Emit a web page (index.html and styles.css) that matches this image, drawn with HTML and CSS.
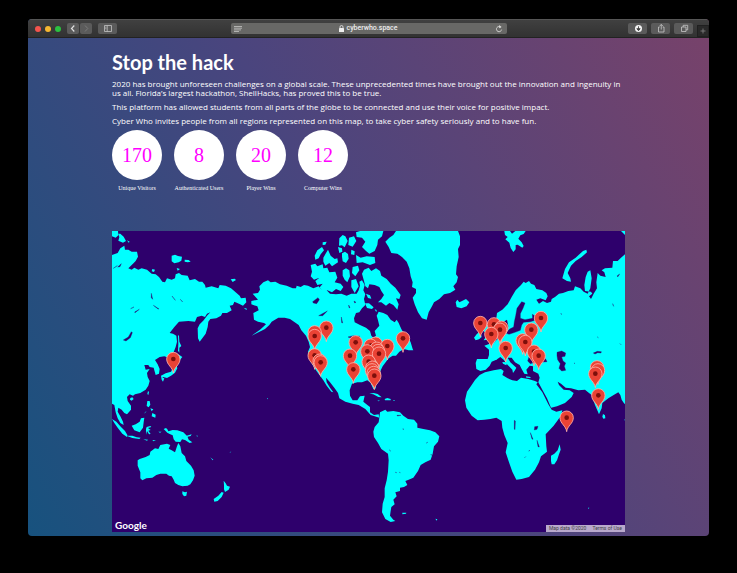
FILE: index.html
```
<!DOCTYPE html>
<html lang="en">
<head>
<meta charset="utf-8">
<meta name="viewport" content="width=device-width, initial-scale=1">
<title>Stop the hack</title>
<link rel="stylesheet" href="styles.css">
</head>
<body>
<div class="window">
  <header class="toolbar">
    <div class="side">
      <div class="lights"><span class="light red"></span><span class="light amber"></span><span class="light green"></span></div>
      <div class="history">
        <button class="tool nav" aria-label="Back"><svg width="12" height="11" viewBox="0 0 12 11"><path d="M7.3 2.5 4.5 5.5l2.8 3" fill="none" stroke="#ddd" stroke-width="1.2"/></svg></button>
        <button class="tool nav" aria-label="Forward"><svg width="12" height="11" viewBox="0 0 12 11"><path d="m5 2.5 2.8 3-2.8 3" fill="none" stroke="#7b7b7b" stroke-width="1"/></svg></button>
      </div>
      <button class="tool" aria-label="Sidebar"><svg width="18" height="11" viewBox="0 0 18 11"><path d="M5.5 2.5h7v6h-7zM8.2 2.5v6M6.3 4.2h1M6.3 5.7h1" fill="none" stroke="#c4c4c4" stroke-width=".8"/></svg></button>
    </div>
    <div class="address">
      <svg width="8" height="8" viewBox="0 0 8 8"><path d="M0 1.5h8M0 3.2h8M0 4.9h7M0 6.5h5" stroke="#bcbcba" stroke-width=".9"/></svg>
      <a class="host" href="#"><svg width="5" height="7" viewBox="0 0 5 7"><rect y="3" width="5" height="4" rx=".6" fill="#eee"/><path d="M1 3.2V2a1.5 1.5 0 0 1 3 0v1.2" fill="none" stroke="#eee" stroke-width=".8"/></svg>cyberwho.space</a>
      <button class="reload" aria-label="Reload"><svg width="8" height="8" viewBox="0 0 8 8"><path d="M6 2.4A2.6 2.6 0 1 0 6.6 4.6" fill="none" stroke="#d8d8d6" stroke-width=".9"/><path d="M4 0 6.6 2 4.2 3.3z" fill="#d8d8d6"/></svg></button>
    </div>
    <div class="side end">
      <button class="tool" aria-label="Downloads"><svg width="18" height="11" viewBox="0 0 18 11"><circle cx="9.500" cy="5.500" r="3.500" fill="#f4f4f4"/><path d="M9.500 3.300v3M7.800 5.700l1.700 2 1.700-2z" fill="#444" stroke="#444" stroke-width=".9"/></svg></button>
      <button class="tool" aria-label="Share"><svg width="18" height="11" viewBox="0 0 18 11"><path d="M7.800 4H6.500v5h5.500V4h-1.300M9.250 6.500v-5M7.700 3l1.550-1.600L10.800 3" fill="none" stroke="#c8c8c8" stroke-width=".8"/></svg></button>
      <button class="tool" aria-label="Tabs"><svg width="18" height="11" viewBox="0 0 18 11"><path d="M6.500 4h4.500v4.500H6.500zM8.200 4V2.300h4.500v4.500H11" fill="none" stroke="#c8c8c8" stroke-width=".8"/></svg></button>
      <button class="newtab" aria-label="New tab"><svg width="10" height="10" viewBox="0 0 10 10"><path d="M2.500 5h5M5 2.500v5" stroke="#858585" stroke-width=".8"/></svg></button>
    </div>
  </header>
  <main class="page">
    <h1>Stop the hack</h1>
    <p>2020 has brought unforeseen challenges on a global scale. These unprecedented times have brought out the innovation and ingenuity in us all. Florida’s largest hackathon, ShellHacks, has proved this to be true.</p>
    <p>This platform has allowed students from all parts of the globe to be connected and use their voice for positive impact.</p>
    <p>Cyber Who invites people from all regions represented on this map, to take cyber safety seriously and to have fun.</p>
    <dl class="stats">
      <div class="stat"><dd>170</dd><dt>Unique Visitors</dt></div>
      <div class="stat"><dd>8</dd><dt>Authenticated Users</dt></div>
      <div class="stat"><dd>20</dd><dt>Player Wins</dt></div>
      <div class="stat"><dd>12</dd><dt>Computer Wins</dt></div>
    </dl>
    <section class="map" aria-label="World map of visitors">
      <svg class="world" viewBox="0 0 1539 903">
        <defs>
          <g id="pin"><path d="M0 42C-2 24-20 18-20 0a20 20 0 0 1 40 0C20 18 2 24 0 42z" fill="#ea4335" stroke="#ffb3ab" stroke-width="2.500"/><circle r="7" fill="#7d0f0b"/></g>
        </defs>
        <!-- East Asia -->
        <g class="land" transform="translate(-21 -18)">
          <path d="M21 90L38 84 46 70 58 62 60 74 70 74 80 80 96 80 99 95 92 108 84 116 70 130 80 134 88 128 100 134 110 130 126 134 140 146 152 148 162 156 172 170 180 172 186 160 200 164 210 160 212 148 222 144 230 150 248 152 254 166 270 162 282 170 292 170 300 180 302 188 320 184 340 190 344 180 362 182 378 190 392 202 404 212 408 220 422 218 424 232 414 242 402 236 388 230 384 240 374 242 380 256 366 264 352 264 348 272 334 280 316 282 310 290 308 306 302 326 284 350 279 340 278 310 284 298 296 286 306 272 316 262 306 266 300 276 290 272 276 276 270 290 250 288 222 290 208 306 194 324 204 326 214 332 216 350 212 366 205 384 195 400 178 394 164 396 150 405 158 418 164 432 162 446 152 450 148 436 146 428 134 426 130 420 118 420 122 434 134 432 126 444 128 456 134 468 130 482 122 494 106 504 90 508 84 512 74 508 66 516 68 528 78 542 78 554 66 568 58 564 50 554 40 548 38 560 46 574 54 590 56 600 46 594 38 580 32 562 28 540 21 536Z"/>
          <path d="M21 18h18l1 13-8 7-11-4zM40 26l6 0 10 9 7 13-9 5-14-6 3-10zM66 46l8 4-3 3zM200 92l10-3 9 4 12 2-2 12-8 5-13 3-8-6zM239 104l12 1 6 5-9 2-9-2zM215 129l10 3-7 5zM377 163l12-2 4 4-10 6zM416 248l10 3-2 4zM142 132l8 2-3 7-7-2z"/>
          <path d="M219 331l3 1 1 18 6 13-6 5 0 15-4-6 1-20zM220 388l12 8-8 10-11 3-4-7 6-5zM212 410L217 430 210 443 198 452 186 459 174 456 170 464 168 452 182 445 198 440 204 428zM172 458L178 460 174 470 170 464z"/>
          <path d="M76 519l6-2 4 5-6 5-5-3zM129 498l3 3-2 9-3-3zM127 528l7 0 2 11-5 8-6-4zM136 550l9 3-5 6zM142 564l10 5-1 9-11-4zM120 562l5-4-7 8z"/>
          <path d="M21 582L34 590 48 606 60 618 67 630 66 636 52 626 38 608 28 594zM64 632l18 0 13 5 12 1-4 4-21-3zM80 602L92 598 104 590 108 580 118 578 116 592 114 608 104 622 88 616zM125 606l11-3 3 3-10 3 8 6-7 2 7 10-5 1-6-10-3 11 0-17zM115 643l14 1-3 3zM142 646l11-1-8 4zM159 603l4 5zM160 620l10 0-5 3zM176 612l7-3 4 4 3 6 13-4 14 1 18 6 12 12 4 10 11 8-8 2-14-9-9-2-5 8-14-1-6-7-3-12-9-4-7-4zM245 632l15-4-3 5-9 2zM275 630l3 3-2 3zM316 697l9 7-2 2zM375 682l4-3-5 6zM486 519l3 2-3 2z"/>
          <path d="M98 706L104 702 122 696 134 690 136 680 150 670 160 672 166 660 186 656 196 660 191 671 200 676 210 682 216 664 220 654 226 664 230 684 240 694 244 708 258 722 266 736 269 752 264 766 256 778 248 782 232 784 220 780 210 774 206 764 200 754 192 752 184 746 166 746 154 750 142 758 124 760 112 766 106 760 106 742 98 722zM232 799l8 3 6-2-2 12-7 2-5-7zM356 767l6 8 4 7 9 3-4 9-11 7-3-8 0-12zM350 801L356 803 350 816 338 828 328 830 326 822 340 812z"/>
        </g>
        <!-- North America and Greenland -->
        <g class="land" transform="translate(504 -18)">
          <path d="M-82 206L-66 204-60 194-62 184-50 172-36 166-28 172-14 170 0 178 20 182 38 190 48 190 50 182 62 186 72 180 84 182 100 190 116 184 122 192 140 196 150 206 168 208 184 206 200 212 214 206 230 206 236 196 240 182 238 170 246 166 254 180 250 196 256 208 252 222 256 240 246 250 238 262 228 264 222 280 224 292 240 300 258 308 270 318 274 332 280 338 288 332 284 318 298 302 294 286 290 272 296 260 310 264 322 270 332 284 344 292 350 284 356 294 364 312 372 326 384 336 392 352 398 372 400 376 386 376 372 372 358 380 348 392 338 392 326 400 318 410 308 424 300 440 290 452 284 470 288 490 280 492 272 474 262 466 246 472 232 472 216 476 209 496 210 512 218 526 232 526 240 514 254 512 250 530 262 540 270 546 270 562 282 570 296 568 298 578 284 574 272 570 256 552 236 540 218 536 196 530 178 520 174 504 164 490 150 472 138 458 140 472 150 488 160 502 154 500 140 482 130 466 120 452 108 436 98 420 88 400 84 380 90 366 86 350 78 332 64 316 56 300 42 290 30 282 14 278-5 278-25 290-32 300-45 312-85 332-60 314-42 298-48 294-66 290-78 284-80 264-64 256-68 244-86 238-86 228-66 224z"/>
          <path d="M92 120L106 116 112 124 128 118 130 130 142 128 148 142 166 140 172 158 164 172 182 176 190 186 182 198 168 192 156 202 142 196 134 202 118 188 128 176 112 180 106 168 118 158 102 164 92 154 96 140z"/>
          <path d="M104 92L112 76 126 66 132 76 122 88 116 100 106 104zM128 52l12-2-4 9-8 1zM130 98L138 84 144 74 152 92 164 102 172 100 174 112 156 124 148 114 136 122 130 110zM178 40l10-10 8 4 7 14-9 19-8-6-9 1zM174 66l12 4 1 10-9 4zM186 85l9-5 9 7 2 14-8 13-10-5-2-14zM207 38l15-4 7 14-11 17-13-5zM214 74l10 5-1 11-10-2zM188 136L198 130 208 136 210 154 202 172 194 164 188 152zM218 126L234 122 238 136 226 154 216 144zM214 166L228 162 236 184 224 204 214 186z"/>
          <path d="M228 22L240 18H310L306 34 294 44 292 60 284 78 268 86 258 78 246 66 256 50 246 38 230 36zM228 90L242 98 260 94 284 96 286 114 270 120 248 112 230 114zM246 146L252 134 266 128 274 138 288 130 300 138 304 152 320 162 332 176 346 188 362 210 358 222 348 220 356 238 352 254 340 240 328 234 318 242 304 232 294 232 304 222 312 210 304 198 298 186 284 180 268 178 264 190 256 184 252 168zM255 235l12 0 14 12-5 5-15-3zM258 206l12 5 4 10-10-2zM284 253l6 2-1 7z"/>
          <path d="M316 50L328 38 340 30 348 18H534L540 34 540 60 534 72 536 96 530 124 528 148 534 156 530 172 520 184 526 194 510 204 492 208 478 222 462 232 456 244 446 262 440 284 426 280 414 262 404 238 398 218 408 204 408 192 396 186 398 172 392 154 388 130 380 110 366 96 352 86 334 84 326 66z"/>
          <path d="M527 232L532 224 538 232 546 228 558 222 568 232 560 244 544 250 530 246zM268 506l13-2 12 3 12 10-10-1-15-8zM314 522l8-3 10 3 0 4-17 0zM292 526l8 1-4 2zM340 525l6 1-5 2z"/>
          <path class="sea" d="M98 230L114 218 118 224 110 236 100 234zM116 272L142 258 128 272zM204 336L220 332 240 334 226 344zM184 276l4 18-3-1zM206 240l4 8-3 0zM222 228l6 4-4 2z"/>
        </g>
        <!-- South America -->
        <g class="land" transform="translate(504 432)">
          <path d="M300 112L316 104 322 110 340 108 360 112 370 122 384 132 402 134 412 146 412 158 430 162 450 166 466 172 478 184 474 200 462 214 458 236 452 254 436 262 422 270 414 288 400 308 386 314 376 318 382 330 372 336 360 338 360 348 346 352 350 364 340 374 344 388 334 396 332 408 330 422 340 434 346 438 332 441 316 432 306 412 308 386 314 366 314 340 320 316 324 290 326 256 324 236 304 222 294 204 282 186 280 170 284 156 296 142 298 128z"/>
          <path d="M367 413l12 0-1 3-11 2zM466 431l6 2-2 4z"/>
        </g>
        <!-- Europe, western Asia and Africa -->
        <g class="land" transform="translate(1029 -18)">
          <path d="M148 18h17l6 8 10-8h31l-6 9-10 4-6 10 10 11 6 11-4 5-14-9-6 1 0 13-7 8-8-12-4-16-12-10 7-7-8-6zM322 160L330 132 342 112 362 98 384 78 394 74 396 82 380 96 362 108 348 122 338 144 346 160 348 170 336 168zM498 18h12v12z"/>
          <path d="M510 88L498 98 488 108 474 108 472 128 450 130 440 136 448 142 452 156 436 152 428 144 424 172 426 190 416 206 408 222 402 214 412 206 408 200 390 198 388 180 392 156 398 140 406 136 410 160 406 190 398 206 386 200 376 190 360 184 356 196 340 198 324 204 312 206 300 216 290 222 288 230 276 234 264 228 252 236 244 224 256 220 272 226 278 214 274 204 262 196 244 192 238 180 228 176 222 168 212 174 206 170 198 180 182 196 170 216 158 238 142 254 126 264 124 280 130 292 146 290 156 284 160 304 154 318 146 330 130 340 118 352 104 356 88 362 102 374 102 390 98 402 66 402 62 414 64 432 76 438 92 434 104 422 110 410 124 404 136 396 146 404 158 420 172 434 174 444 180 436 184 428 166 412 158 398 170 398 180 412 194 420 200 432 208 446 218 448 214 434 224 422 234 424 234 438 250 446 254 458 250 472 262 494 276 520 288 548 306 544 330 534 350 516 356 504 344 496 326 494 312 480 308 470 318 476 332 488 348 490 370 496 390 494 402 504 410 510 420 540 432 568 440 550 442 534 460 520 476 510 490 502 496 510 500 524 508 536 510 536z"/>
          <path d="M60 465L74 450 90 442 116 436 138 432 146 438 142 450 158 460 172 466 186 468 198 458 220 462 240 468 248 472 244 478 262 502 280 538 290 554 304 560 322 556 318 572 296 602 272 628 274 664 276 680 258 694 252 712 240 734 222 756 200 762 184 764 172 740 162 712 152 682 158 654 148 630 142 608 140 588 124 578 106 582 88 584 68 586 50 572 34 548 30 526 36 500 50 480z"/>
          <path d="M57 338l9-12 10-6 4 16-8 7-10 3zM80 302l14-8 6 12 2 12 12 12-2 12-26 4 8-13-2-10-8-6zM444 567l6 4 1 9-6 1-3-6zM288 708L288 692 298 686 308 676 314 658 317 674 312 688 306 706 298 718 290 718zM142 411l15 1-3 9-10-5zM119 391l6-2 1 14-6 2zM213 454l14 2-1 3-12-1zM399 848l4 0-2 4zM509 581l2 3-2 3z"/>
          <path class="sea" d="M200 230L210 234 204 250 196 266 196 280 210 284 232 280 240 286 226 290 206 292 200 300 196 316 180 322 162 328 152 324 164 312 176 306 178 290 182 272 186 250zM232 268l8 5 2 14-9-4zM306 392L306 382 320 378 332 384 330 394 320 396 324 408 332 414 328 424 332 436 320 438 312 430 316 416 308 404zM218 408L222 396 234 388 246 398 256 394 272 402 276 410 256 412 240 412 226 416zM239 605l10-1-3 9-8 2zM226 623l8 20-3-1zM246 646l7 20-4-1zM178 586l3 2-1 26-2-2zM415 384l12-5 12 1-1 4-10-1-8 4z"/>
        </g>
        <!-- Lakes and inlets -->
        <g class="sea">
          <path d="M34 327l15-9 9-16 3 3-6 15-13 10zM68 243l14-8-13 10zM118 187l4 18-4-5zM124 223l17 11-4-1zM180 195l10 13zM205 205l7 8zM56 233l10-5zM17 108l11-10-4 9zM4 112l12-8zM855 553l12 0-11 2zM872 594l4 1zM832 657l4 3zM850 724l4 1zM862 724l3 1zM943 636l4-2zM956 671l4 1zM1238 680l3-3zM1250 660l4-2zM1516 134l7-5-6 9zM1502 218l3 8zM1346 248l4 2zM1386 396l3 2zM1524 338l3 3zM1456 318l3 2z"/>
        </g>
        <!-- Visitors -->
        <g transform="translate(-21 -18)"><use href="#pin" x="205" y="402"/></g>
        <g transform="translate(504 -18)">
          <use href="#pin" x="139" y="308"/><use href="#pin" x="104" y="322"/><use href="#pin" x="104" y="333"/><use href="#pin" x="369" y="340"/><use href="#pin" x="227" y="352"/><use href="#pin" x="287" y="356"/><use href="#pin" x="272" y="362"/><use href="#pin" x="322" y="363"/><use href="#pin" x="290" y="371"/><use href="#pin" x="294" y="378"/><use href="#pin" x="262" y="379"/><use href="#pin" x="297" y="386"/><use href="#pin" x="104" y="391"/><use href="#pin" x="210" y="392"/><use href="#pin" x="119" y="407"/><use href="#pin" x="266" y="410"/><use href="#pin" x="122" y="412"/><use href="#pin" x="277" y="428"/><use href="#pin" x="220" y="433"/><use href="#pin" x="276" y="436"/><use href="#pin" x="281" y="444"/><use href="#pin" x="283" y="452"/>
        </g>
        <g transform="translate(1029 -18)">
          <use href="#pin" x="258" y="279"/><use href="#pin" x="76" y="294"/><use href="#pin" x="117" y="298"/><use href="#pin" x="139" y="308"/><use href="#pin" x="135" y="314"/><use href="#pin" x="229" y="314"/><use href="#pin" x="109" y="327"/><use href="#pin" x="203" y="346"/><use href="#pin" x="211" y="351"/><use href="#pin" x="152" y="369"/><use href="#pin" x="237" y="380"/><use href="#pin" x="251" y="392"/><use href="#pin" x="426" y="427"/><use href="#pin" x="429" y="436"/><use href="#pin" x="421" y="446"/><use href="#pin" x="430" y="511"/><use href="#pin" x="335" y="578"/>
        </g>
      </svg>
      <span class="logo">Google</span>
      <div class="credits"><span>Map data ©2020</span><a href="#">Terms of Use</a></div>
    </section>
  </main>
</div>
</body>
</html>
```
FILE: styles.css
```
* { box-sizing: border-box; }
body { margin: 0; padding: 19px 28px 37px; background: #000; color: #fff; font-family: Lato, "Open Sans", sans-serif; }
button { padding: 0; border: 0; background: none; }
svg { display: block; }
a { color: inherit; text-decoration: none; }

.window { border-radius: 4px; overflow: hidden; background: linear-gradient(60deg, #17527e, #4a457e 50%, #78426a); }

.toolbar { display: grid; grid-template-columns: 1fr 276px 1fr; align-items: center; height: 19px; background: linear-gradient(#404040, #323232); border-top: 1px solid #555; border-bottom: 1px solid #222; }
.side { display: flex; align-items: center; gap: 6px; padding-left: 7px; }
.end { align-self: stretch; justify-content: flex-end; gap: 4px; padding: 0; }
.lights { display: flex; gap: 4px; }
.light { width: 6px; height: 6px; border-radius: 50%; }
.red { background: #f4544d; }
.amber { background: #f6b731; }
.green { background: #2bc140; }
.history { display: flex; gap: 1px; }
.tool { display: flex; justify-content: center; width: 19px; height: 11px; border-radius: 2px; background: #5b5b5b; }
.nav { width: 12px; }
.newtab { align-self: flex-end; width: 12px; height: 12px; background: #292929; border: 1px solid #202020; }
.address { display: flex; align-items: center; justify-content: space-between; height: 11px; padding: 0 3px; border-radius: 2px; background: #686866; }
.host { display: flex; align-items: center; gap: 2px; color: #eee; font: 500 7px/11px Roboto, sans-serif; }

.page { padding: 12px 84px 4px; }
h1 { margin: 0 0 5px; font-size: 20px; line-height: 24px; font-weight: 700; }
p { margin: 0 0 5px; font: 500 8px/9px "Open Sans", sans-serif; }
.stats { display: flex; gap: 12px; margin: 0 0 38px; font-family: "Liberation Serif", serif; }
.stat { display: flex; flex-direction: column; align-items: center; gap: 4px; width: 50px; }
dd { display: flex; align-items: center; justify-content: center; width: 50px; height: 50px; margin: 0; border-radius: 50%; background: #fff; color: #f0f; font-size: 20px; }
dt { font-size: 6px; line-height: 9px; white-space: nowrap; }

.map { position: relative; background: #2e006c; }
.world { width: 100%; height: auto; }
.land { fill: #0ff; }
.sea { fill: #2e006c; stroke: #2e006c; stroke-width: 1; }
.logo { position: absolute; left: 3px; bottom: 1px; font-size: 10px; line-height: 12px; font-weight: 700; }
.credits { position: absolute; right: 0; bottom: 0; display: flex; gap: 6px; padding: 0 3px; background: #b9a9cc; color: #444; font: 5px/7px Roboto, sans-serif; }
```
